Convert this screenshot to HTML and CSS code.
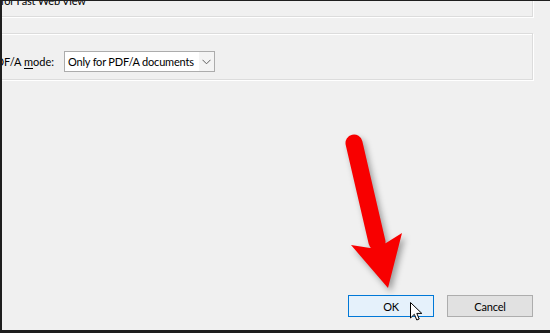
FILE: index.html
```html
<!DOCTYPE html>
<html lang="en">
<head>
<meta charset="utf-8">
<title>Options</title>
<link rel="stylesheet" href="styles.css">
</head>
<body>
<div class="screen">
  <div class="group group-top">
    <span class="opt">Optimize for Fast Web View</span>
  </div>

  <div class="group group-pdfa">
    <div class="row">
      <span class="lbl">PDF/A <u>m</u>ode:</span>
      <div class="combo">
        <span class="val">Only for PDF/A documents</span>
        <span class="drop">
          <svg width="9" height="6" viewBox="0 0 9 6"><path d="M0.5 0.8 L4.5 4.8 L8.5 0.8" fill="none" stroke="#606060" stroke-width="1"/></svg>
        </span>
      </div>
    </div>
  </div>

  <div class="buttons">
    <button class="btn ok">OK</button>
    <button class="btn">Cancel</button>
  </div>

  <!-- red pointer arrow over the dialog -->
  <svg class="arrow" width="550" height="333" viewBox="0 0 550 333">
    <line x1="354" y1="143" x2="377" y2="242" stroke="#f80000" stroke-width="17" stroke-linecap="round"/>
    <polygon points="351,245 370,248 386,243 402,233 388,288" fill="#f80000"/>
  </svg>

  <svg class="cursor" width="13" height="19" viewBox="0 0 13 19">
    <path d="M0.5 0.5 L0.5 16 L4.3 12.3 L6.8 18 L9.2 17 L6.8 11.4 L11.8 11.4 Z" fill="#fff" stroke="#000" stroke-width="1" stroke-linejoin="round"/>
  </svg>
</div>
</body>
</html>
```

FILE: styles.css
```css
*,*::before,*::after {box-sizing: border-box;}
html, body {
  margin: 0;
  padding: 0;
  background: #f0f0f0;
}
body {
  font-family: Lato, "Noto Sans", sans-serif;
  font-size: 11px;
  letter-spacing: -0.2px;
  color: #000;
}
.screen {
  position: relative;
  width: 550px;
  height: 333px;
  overflow: hidden;
  background: #f0f0f0;
  border-top: 1px solid #1e1e1e;
  border-left: 2px solid #1e1e1e;
  border-bottom: 3px solid #1e1e1e;
  padding-right: 17px;
}
.group {
  margin-left: -14px;
  border: 1px solid #dcdcdc;
  box-shadow: 1px 1px 0 #fff, inset 1px 1px 0 #fff;
}
.group-top {
  margin-top: -21px;
  height: 37px;
  padding: 12px 0 0 0;
  line-height: 15px;
}
.opt {
  display: block;
  margin-left: -33px;
  white-space: nowrap;
}
.group-pdfa {
  margin-top: 16px;
  height: 47px;
  padding-top: 17px;
}
.row {
  display: flex;
  align-items: center;
}
.lbl {
  width: 65px;
  flex-shrink: 0;
  text-align: right;
  margin-right: 10px;
  white-space: nowrap;
  letter-spacing: 0;
}
.lbl u {text-decoration-thickness: 1px; text-underline-offset: 2px;}
.combo {
  display: flex;
  flex-shrink: 0;
  width: 151px;
  height: 21px;
  border: 1px solid #acacac;
  background: #fff;
}
.val {
  flex: 1;
  padding-left: 3px;
  line-height: 19px;
  white-space: nowrap;
  overflow: hidden;
}
.drop {
  width: 15px;
  background: #f4f4f4;
  display: flex;
  align-items: center;
  justify-content: center;
}
.buttons {
  display: flex;
  justify-content: flex-end;
  gap: 13px;
  margin-top: 215px;
}
.btn {
  width: 86px;
  height: 22px;
  margin: 0;
  padding: 0;
  border: 1px solid #adadad;
  background: #e1e1e1;
  font-family: Lato, "Noto Sans", sans-serif;
  font-size: 11px;
  letter-spacing: -0.2px;
  color: #000;
}
.btn.ok {
  border-color: #0078d7;
  background: #e5f1fb;
}
.arrow {
  position: absolute;
  left: -2px;
  top: -1px;
  pointer-events: none;
  filter: drop-shadow(3px 4px 3px rgba(0,0,0,0.35));
}
.cursor {
  position: absolute;
  left: 408px;
  top: 301px;
}
```
